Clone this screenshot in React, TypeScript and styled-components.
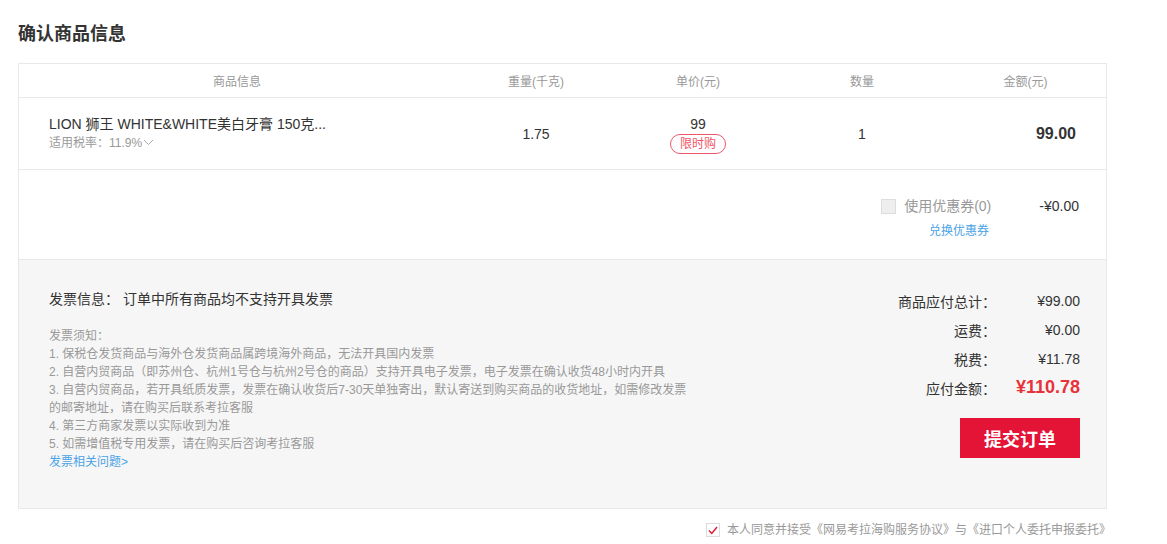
import React from 'react';
import styled, { createGlobalStyle } from 'styled-components';

const GlobalStyle = createGlobalStyle`
  body {
    margin: 0;
    background: #fff;
    font-family: "Liberation Sans", Arial, "Noto Sans CJK SC", sans-serif;
    color: #333;
  }
`;

const notes = [
  '1. 保税仓发货商品与海外仓发货商品属跨境海外商品，无法开具国内发票',
  '2. 自营内贸商品（即苏州仓、杭州1号仓与杭州2号仓的商品）支持开具电子发票，电子发票在确认收货48小时内开具',
  '3. 自营内贸商品，若开具纸质发票，发票在确认收货后7-30天单独寄出，默认寄送到购买商品的收货地址，如需修改发票的邮寄地址，请在购买后联系考拉客服',
  '4. 第三方商家发票以实际收到为准',
  '5. 如需增值税专用发票，请在购买后咨询考拉客服',
];

const summary = [
  { label: '商品应付总计：', value: '¥99.00' },
  { label: '运费：', value: '¥0.00' },
  { label: '税费：', value: '¥11.78' },
];

const App: React.FunctionComponent = () => (
  <Page>
    <GlobalStyle />
    <Title>确认商品信息</Title>
    <Panel>
      <HeadRow>
        <HeadCell>商品信息</HeadCell>
        <HeadCell>重量(千克)</HeadCell>
        <HeadCell>单价(元)</HeadCell>
        <HeadCell>数量</HeadCell>
        <HeadCell>金额(元)</HeadCell>
      </HeadRow>
      <GoodsRow>
        <GoodsInfo>
          <GoodsName>LION 狮王 WHITE&amp;WHITE美白牙膏 150克...</GoodsName>
          <TaxRate>
            适用税率：11.9%
            <svg width="11" height="7" viewBox="0 0 11 7">
              <path d="M1 1l4.5 4.5L10 1" fill="none" stroke="#aaa" strokeWidth="1" />
            </svg>
          </TaxRate>
        </GoodsInfo>
        <Cell>1.75</Cell>
        <Cell>
          <PriceStack>
            <span>99</span>
            <Tag>限时购</Tag>
          </PriceStack>
        </Cell>
        <Cell>1</Cell>
        <Amount>99.00</Amount>
      </GoodsRow>
      <CouponArea>
        <CouponLine>
          <CouponCheck />
          <CouponLabel>使用优惠券(0)</CouponLabel>
          <CouponValue>-¥0.00</CouponValue>
        </CouponLine>
        <ExchangeLink>兑换优惠券</ExchangeLink>
      </CouponArea>
      <Footer>
        <Invoice>
          <InvoiceTitle>发票信息： 订单中所有商品均不支持开具发票</InvoiceTitle>
          <Notes>
            <div>发票须知：</div>
            {notes.map((n) => (
              <div key={n}>{n}</div>
            ))}
            <BlueLink>发票相关问题&gt;</BlueLink>
          </Notes>
        </Invoice>
        <Summary>
          {summary.map((s) => (
            <SumRow key={s.label}>
              <SumLabel>{s.label}</SumLabel>
              <SumValue>{s.value}</SumValue>
            </SumRow>
          ))}
          <SumRow>
            <SumLabel>应付金额：</SumLabel>
            <TotalValue>¥110.78</TotalValue>
          </SumRow>
          <SubmitButton>提交订单</SubmitButton>
        </Summary>
      </Footer>
    </Panel>
    <Agreement>
      <AgreeCheck>
        <svg width="10" height="9" viewBox="0 0 10 9">
          <path d="M1 4.5l2.8 3L9 1" fill="none" stroke="#e31436" strokeWidth="1.4" />
        </svg>
      </AgreeCheck>
      本人同意并接受《网易考拉海购服务协议》与《进口个人委托申报委托》
    </Agreement>
  </Page>
);

const Page = styled.div`
  width: 1089px;
  padding: 22px 0 0 18px;
`;

const Title = styled.h2`
  margin: 0 0 17px;
  font-size: 18px;
  line-height: 24px;
  font-weight: 700;
  color: #333;
`;

const Panel = styled.div`
  border: 1px solid #e8e8e8;
`;

const columns = '436px 162px 162px 166px 1fr';

const HeadRow = styled.div`
  display: grid;
  grid-template-columns: ${columns};
  height: 33px;
  border-bottom: 1px solid #e8e8e8;
`;

const HeadCell = styled.div`
  display: flex;
  align-items: center;
  justify-content: center;
  font-size: 12px;
  color: #999;
`;

const GoodsRow = styled.div`
  display: grid;
  grid-template-columns: ${columns};
  height: 71px;
  border-bottom: 1px solid #e8e8e8;
`;

const GoodsInfo = styled.div`
  display: flex;
  flex-direction: column;
  justify-content: center;
  padding-left: 30px;
  padding-bottom: 2px;
`;

const GoodsName = styled.div`
  font-size: 14px;
  line-height: 20px;
  color: #333;
`;

const TaxRate = styled.div`
  display: flex;
  align-items: center;
  gap: 1px;
  font-size: 12px;
  line-height: 18px;
  color: #999;
`;

const Cell = styled.div`
  display: flex;
  align-items: center;
  justify-content: center;
  font-size: 14px;
  color: #333;
`;

const PriceStack = styled.div`
  display: flex;
  flex-direction: column;
  align-items: center;
  gap: 2px;
  padding-top: 2px;
`;

const Tag = styled.span`
  display: inline-block;
  padding: 0 9px;
  height: 18px;
  line-height: 18px;
  font-size: 12px;
  color: #f0566a;
  border: 1px solid #f0566a;
  border-radius: 10px;
`;

const Amount = styled.div`
  display: flex;
  align-items: center;
  justify-content: flex-end;
  padding-right: 30px;
  font-size: 16px;
  font-weight: 700;
  color: #333;
`;

const CouponArea = styled.div`
  display: flex;
  flex-direction: column;
  align-items: flex-end;
  height: 90px;
  padding: 26px 27px 0 0;
  box-sizing: border-box;
  border-bottom: 1px solid #e8e8e8;
`;

const CouponLine = styled.div`
  display: flex;
  align-items: center;
  font-size: 14px;
  line-height: 20px;
`;

const CouponCheck = styled.span`
  width: 13px;
  height: 13px;
  border: 1px solid #ddd;
  background: #eee;
  margin-right: 8px;
`;

const CouponLabel = styled.span`
  color: #999;
`;

const CouponValue = styled.span`
  margin-left: 48px;
  color: #333;
`;

const ExchangeLink = styled.a`
  margin: 6px 90px 0 0;
  font-size: 12px;
  line-height: 18px;
  color: #4aa3e6;
  cursor: pointer;
`;

const Footer = styled.div`
  display: flex;
  justify-content: space-between;
  background: #f6f6f6;
  padding: 29px 26px 37px 30px;
`;

const Invoice = styled.div`
  width: 645px;
`;

const InvoiceTitle = styled.div`
  font-size: 14px;
  line-height: 20px;
  color: #333;
  margin-bottom: 18px;
`;

const Notes = styled.div`
  font-size: 12px;
  line-height: 18px;
  color: #999;
`;

const BlueLink = styled.a`
  display: block;
  color: #4aa3e6;
  cursor: pointer;
`;

const Summary = styled.div`
  display: flex;
  flex-direction: column;
  align-items: flex-end;
  margin-top: -3px;
`;

const SumRow = styled.div`
  display: flex;
  align-items: center;
  height: 29px;
  font-size: 14px;
  color: #333;
`;

const SumLabel = styled.span`
  text-align: right;
  margin-right: 4px;
`;

const SumValue = styled.span`
  width: 80px;
  text-align: right;
`;

const TotalValue = styled.span`
  width: 80px;
  text-align: right;
  font-size: 18px;
  font-weight: 700;
  color: #e8313a;
`;

const SubmitButton = styled.button`
  margin-top: 16px;
  width: 120px;
  height: 40px;
  border: none;
  background: #e31436;
  color: #fff;
  font-family: inherit;
  font-size: 18px;
  font-weight: 700;
  cursor: pointer;
`;

const Agreement = styled.div`
  display: flex;
  align-items: center;
  justify-content: flex-end;
  margin-top: 12px;
  margin-right: -4px;
  font-size: 12px;
  line-height: 18px;
  color: #999;
`;

const AgreeCheck = styled.span`
  display: inline-flex;
  align-items: center;
  justify-content: center;
  width: 12px;
  height: 12px;
  border: 1px solid #ddd;
  background: #fff;
  margin-right: 7px;
`;

export default App;
